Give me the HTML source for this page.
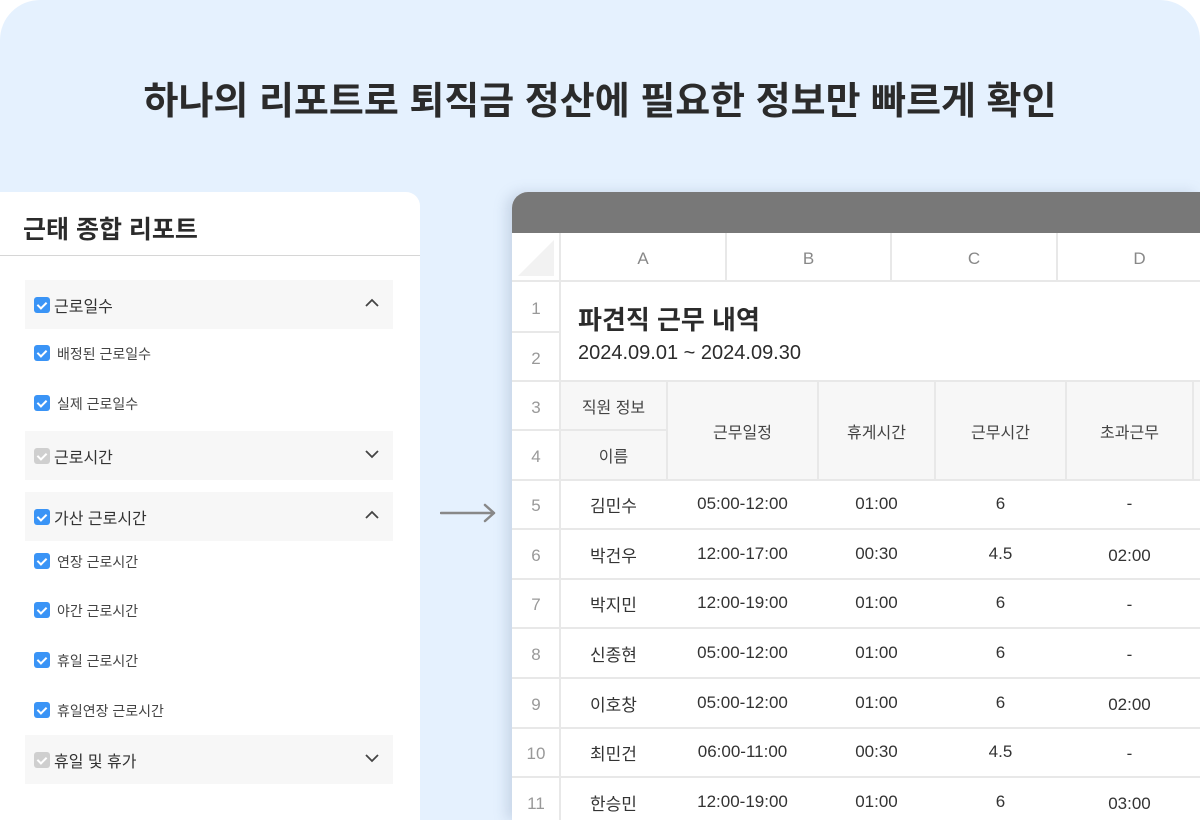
<!DOCTYPE html>
<html><head><meta charset="utf-8"><style>
*{margin:0;padding:0;box-sizing:border-box}
html,body{width:1200px;height:820px;overflow:hidden}
body{position:relative;background:#fff;font-family:"Liberation Sans","Noto Sans CJK KR",sans-serif;color:#333}
.bg{position:absolute;left:0;top:0;width:1200px;height:820px;background:#e5f1fe;border-radius:40px 40px 0 0}
.abs{position:absolute}
h1{position:absolute;left:0;width:1200px;top:70px;text-align:center;font-size:38px;font-weight:700;color:#2b2b2b;letter-spacing:0px}
.panel{left:0;top:192px;width:420px;height:628px;background:#fff;border-radius:0 14px 0 0}
.ptitle{left:23px;top:210px;font-size:25px;font-weight:700;color:#2b2b2b}
.div{left:0;top:255px;width:420px;height:1px;background:#d6d6d6}
.sec{left:25px;width:368px;height:49px;background:#f7f7f7}
.sec .cb{left:9px;top:17px}
.sec .t{position:absolute;left:29px;top:13px;font-size:16px;color:#333}
.sec svg.ch{position:absolute;right:14px;top:18px}
.cb{position:absolute;width:16px;height:16px;border-radius:3px;background:#3a94f6}
.cb.g{background:#cfcfcf}
.cb:after{content:"";position:absolute;left:5px;top:2.5px;width:4px;height:7px;border:solid #fff;border-width:0 2px 2px 0;transform:rotate(45deg)}
.sub{left:34px;height:20px}
.sub .cb{left:0;top:2px}
.sub .t{position:absolute;left:23px;top:1px;font-size:14px;color:#444;white-space:nowrap}
.sheet{left:512px;top:192px;width:688px;height:628px;background:#fff;border-radius:16px 0 0 0;overflow:hidden;box-shadow:-6px 0 12px rgba(120,140,170,.25)}
.bar{position:absolute;left:0;top:0;width:700px;height:41px;background:#787878}
.c{position:absolute;display:flex;align-items:center;justify-content:center;font-size:17px;color:#333}
.rn{color:#999;font-size:17px;padding-top:4px}
.hd{color:#888;font-size:17px;padding-top:3px}
.l{position:absolute;background:#e8e8e8}
.rows{left:512px;top:479px;width:688px;height:341px;overflow:hidden}
</style></head><body>
<div class="bg"></div>
<h1>하나의 리포트로 퇴직금 정산에 필요한 정보만 빠르게 확인</h1>

<div class="abs panel"></div>
<div class="abs ptitle">근태 종합 리포트</div>
<div class="abs div"></div>

<div class="abs sec" style="top:280px"><span class="cb"></span><span class="t">근로일수</span><svg class="ch" width="14" height="10" viewBox="0 0 14 10"><path d="M1 8L7 2L13 8" fill="none" stroke="#444" stroke-width="1.8"/></svg></div>
<div class="abs sub" style="top:343px"><span class="cb"></span><span class="t">배정된 근로일수</span></div>
<div class="abs sub" style="top:393px"><span class="cb"></span><span class="t">실제 근로일수</span></div>
<div class="abs sec" style="top:431px"><span class="cb g"></span><span class="t">근로시간</span><svg class="ch" width="14" height="10" viewBox="0 0 14 10"><path d="M1 2L7 8L13 2" fill="none" stroke="#444" stroke-width="1.8"/></svg></div>
<div class="abs sec" style="top:492px"><span class="cb"></span><span class="t">가산 근로시간</span><svg class="ch" width="14" height="10" viewBox="0 0 14 10"><path d="M1 8L7 2L13 8" fill="none" stroke="#444" stroke-width="1.8"/></svg></div>
<div class="abs sub" style="top:551px"><span class="cb"></span><span class="t">연장 근로시간</span></div>
<div class="abs sub" style="top:600px"><span class="cb"></span><span class="t">야간 근로시간</span></div>
<div class="abs sub" style="top:650px"><span class="cb"></span><span class="t">휴일 근로시간</span></div>
<div class="abs sub" style="top:700px"><span class="cb"></span><span class="t">휴일연장 근로시간</span></div>
<div class="abs sec" style="top:735px"><span class="cb g"></span><span class="t">휴일 및 휴가</span><svg class="ch" width="14" height="10" viewBox="0 0 14 10"><path d="M1 2L7 8L13 2" fill="none" stroke="#444" stroke-width="1.8"/></svg></div>

<svg class="abs" style="left:440px;top:503px" width="58" height="20" viewBox="0 0 58 20"><path d="M1 10H54M45 2L54 10L45 18" fill="none" stroke="#888" stroke-width="2.5" stroke-linecap="round" stroke-linejoin="round"/></svg>

<div class="abs sheet">
<div class="bar"></div>
<svg class="abs" style="left:6px;top:48px" width="36" height="36"><path d="M36 0V36H0Z" fill="#f2f2f2"/></svg>
<div class="abs" style="left:48px;top:188px;width:107px;height:99px;background:#f7f7f7"></div>
<div class="abs" style="left:155px;top:188px;width:545px;height:99px;background:#f7f7f7"></div>
<div class="l" style="left:0;top:88px;width:700px;height:2px"></div>
<div class="l" style="left:47px;top:41px;width:2px;height:600px"></div>
<div class="l" style="left:213px;top:41px;width:2px;height:48px"></div>
<div class="l" style="left:378px;top:41px;width:2px;height:48px"></div>
<div class="l" style="left:544px;top:41px;width:2px;height:48px"></div>
<div class="l" style="left:0;top:139px;width:48px;height:2px"></div>
<div class="l" style="left:0;top:188px;width:700px;height:2px"></div>
<div class="l" style="left:0;top:237px;width:155px;height:2px"></div>
<div class="l" style="left:0;top:287px;width:700px;height:2px"></div>
<div class="l" style="left:154px;top:188px;width:2px;height:99px"></div>
<div class="l" style="left:305px;top:188px;width:2px;height:99px"></div>
<div class="l" style="left:422px;top:188px;width:2px;height:99px"></div>
<div class="l" style="left:553px;top:188px;width:2px;height:99px"></div>
<div class="l" style="left:680px;top:188px;width:2px;height:99px"></div>
<div class="l" style="left:0;top:336px;width:700px;height:2px"></div>
<div class="l" style="left:0;top:386px;width:700px;height:2px"></div>
<div class="l" style="left:0;top:435px;width:700px;height:2px"></div>
<div class="l" style="left:0;top:485px;width:700px;height:2px"></div>
<div class="l" style="left:0;top:535px;width:700px;height:2px"></div>
<div class="l" style="left:0;top:584px;width:700px;height:2px"></div>

<div class="c hd" style="left:48px;top:41px;width:166px;height:48px">A</div>
<div class="c hd" style="left:214px;top:41px;width:165px;height:48px">B</div>
<div class="c hd" style="left:379px;top:41px;width:166px;height:48px">C</div>
<div class="c hd" style="left:545px;top:41px;width:165px;height:48px">D</div>

<div class="c rn" style="left:0;top:90px;width:48px;height:49px">1</div>
<div class="c rn" style="left:0;top:140px;width:48px;height:49px">2</div>
<div class="c rn" style="left:0;top:190px;width:48px;height:48px">3</div>
<div class="c rn" style="left:0;top:239px;width:48px;height:48px">4</div>
<div class="abs" style="left:66px;top:108px;font-size:26px;font-weight:700;color:#2b2b2b">파견직 근무 내역</div>
<div class="abs" style="left:66px;top:150px;font-size:20px;color:#2b2b2b">2024.09.01 ~ 2024.09.30</div>

<div class="c" style="left:48px;top:190px;width:107px;height:47px;font-size:16px;color:#444">직원 정보</div>
<div class="c" style="left:48px;top:239px;width:107px;height:48px;font-size:16px;color:#444">이름</div>
<div class="c" style="left:155px;top:190px;width:151px;height:97px;font-size:16px;color:#444">근무일정</div>
<div class="c" style="left:306px;top:190px;width:117px;height:97px;font-size:16px;color:#444">휴게시간</div>
<div class="c" style="left:423px;top:190px;width:131px;height:97px;font-size:16px;color:#444">근무시간</div>
<div class="c" style="left:554px;top:190px;width:127px;height:97px;font-size:16px;color:#444">초과근무</div>
</div>

<div class="abs rows">
<div class="c rn" style="left:0;top:0;width:48px;height:50px">5</div><div class="c" style="left:48px;top:0;width:107px;height:50px">김민수</div><div class="c" style="left:155px;top:0;width:151px;height:50px">05:00-12:00</div><div class="c" style="left:306px;top:0;width:117px;height:50px">01:00</div><div class="c" style="left:423px;top:0;width:131px;height:50px">6</div><div class="c" style="left:554px;top:0;width:127px;height:50px">-</div>
<div class="c rn" style="left:0;top:50px;width:48px;height:50px">6</div><div class="c" style="left:48px;top:50px;width:107px;height:50px">박건우</div><div class="c" style="left:155px;top:50px;width:151px;height:50px">12:00-17:00</div><div class="c" style="left:306px;top:50px;width:117px;height:50px">00:30</div><div class="c" style="left:423px;top:50px;width:131px;height:50px">4.5</div><div class="c" style="left:554px;top:52px;width:127px;height:50px">02:00</div>
<div class="c rn" style="left:0;top:99px;width:48px;height:50px">7</div><div class="c" style="left:48px;top:99px;width:107px;height:50px">박지민</div><div class="c" style="left:155px;top:99px;width:151px;height:50px">12:00-19:00</div><div class="c" style="left:306px;top:99px;width:117px;height:50px">01:00</div><div class="c" style="left:423px;top:99px;width:131px;height:50px">6</div><div class="c" style="left:554px;top:101px;width:127px;height:50px">-</div>
<div class="c rn" style="left:0;top:149px;width:48px;height:50px">8</div><div class="c" style="left:48px;top:149px;width:107px;height:50px">신종현</div><div class="c" style="left:155px;top:149px;width:151px;height:50px">05:00-12:00</div><div class="c" style="left:306px;top:149px;width:117px;height:50px">01:00</div><div class="c" style="left:423px;top:149px;width:131px;height:50px">6</div><div class="c" style="left:554px;top:151px;width:127px;height:50px">-</div>
<div class="c rn" style="left:0;top:199px;width:48px;height:50px">9</div><div class="c" style="left:48px;top:199px;width:107px;height:50px">이호창</div><div class="c" style="left:155px;top:199px;width:151px;height:50px">05:00-12:00</div><div class="c" style="left:306px;top:199px;width:117px;height:50px">01:00</div><div class="c" style="left:423px;top:199px;width:131px;height:50px">6</div><div class="c" style="left:554px;top:201px;width:127px;height:50px">02:00</div>
<div class="c rn" style="left:0;top:248px;width:48px;height:50px">10</div><div class="c" style="left:48px;top:248px;width:107px;height:50px">최민건</div><div class="c" style="left:155px;top:248px;width:151px;height:50px">06:00-11:00</div><div class="c" style="left:306px;top:248px;width:117px;height:50px">00:30</div><div class="c" style="left:423px;top:248px;width:131px;height:50px">4.5</div><div class="c" style="left:554px;top:250px;width:127px;height:50px">-</div>
<div class="c rn" style="left:0;top:298px;width:48px;height:50px">11</div><div class="c" style="left:48px;top:298px;width:107px;height:50px">한승민</div><div class="c" style="left:155px;top:298px;width:151px;height:50px">12:00-19:00</div><div class="c" style="left:306px;top:298px;width:117px;height:50px">01:00</div><div class="c" style="left:423px;top:298px;width:131px;height:50px">6</div><div class="c" style="left:554px;top:300px;width:127px;height:50px">03:00</div>
</div>
</body></html>
